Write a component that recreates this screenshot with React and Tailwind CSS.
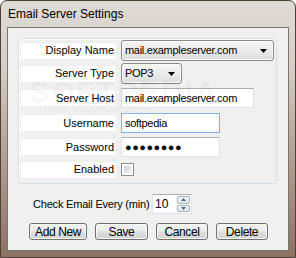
import React from "react";

function Label({ children }) {
  return (
    <div className="w-[95px] h-[16px] bg-white flex items-center justify-end pr-[2px] text-[11px] text-black">
      {children}
    </div>
  );
}

function Arrow() {
  return (
    <svg width="7" height="4" viewBox="0 0 7 4" className="shrink-0">
      <path d="M0 0h7L3.5 4z" fill="#000" />
    </svg>
  );
}

function Select({ value, width }) {
  return (
    <div
      className={`${width} h-[21px] rounded-[3px] border border-[#8a8a8a] bg-gradient-to-b from-[#f6f6f6] via-[#ececec] to-[#dcdcdc] flex items-center justify-between pl-[3px] pr-[6px] text-[11px] tracking-[-0.3px] shadow-[inset_0_0_0_1px_#fbfbfb]`}
    >
      <span>{value}</span>
      <Arrow />
    </div>
  );
}

function Input({ value, width, focus }) {
  return (
    <div
      className={`${width} h-[20px] bg-white border flex items-center pl-[3px] text-[11px] tracking-[-0.3px] ${
        focus
          ? "border-[#7eb4ea]"
          : "border-[#e2e3ea] border-t-[#abadb3]"
      }`}
    >
      {value}
    </div>
  );
}

function Button({ children, width }) {
  return (
    <div
      className={`${width} h-[17px] rounded-[3px] border border-[#707070] bg-[linear-gradient(#f4f4f4,#ececec_45%,#dedede_55%,#d2d2d2)] shadow-[inset_0_0_0_1px_#fcfcfc] flex items-center justify-center text-[12px] tracking-[-0.4px] text-black`}
    >
      {children}
    </div>
  );
}

export default function App() {
  return (
    <div className="w-[296px] h-[258px] overflow-hidden font-['Liberation_Sans',Arial,sans-serif] text-black">
      <div className="relative w-[296px] h-[258px] rounded-t-[7px] border border-[#4d4038] bg-[linear-gradient(#dedad5,#d6cfc8_25%,#b9a697_55%,#8d7262)]">
        <div className="h-[26px] pl-[7px] flex items-center text-[12px] text-black">
          Email Server Settings
        </div>
        <div className="ml-[6px] w-[282px] h-[224px] border border-[#7c7671] bg-[#f0f0f0]">
          <div className="pl-[10px] pt-[10px]">
            <div className="w-[259px] h-[146px] rounded-[3px] border border-[#d5dfe5] shadow-[inset_1px_1px_0_#fff] pl-[2px] pt-[1px] flex flex-col">
              <div className="h-[21px] flex items-center gap-[5px]">
                <Label>Display Name</Label>
                <Select value="mail.exampleserver.com" width="w-[153px]" />
              </div>
              <div className="mt-[2px] h-[21px] flex items-center gap-[5px]">
                <Label>Server Type</Label>
                <Select value="POP3" width="w-[61px]" />
              </div>
              <div className="mt-[4px] h-[20px] flex items-center gap-[5px]">
                <Label>Server Host</Label>
                <Input value="mail.exampleserver.com" width="w-[133px]" />
              </div>
              <div className="mt-[5px] h-[20px] flex items-center gap-[5px]">
                <Label>Username</Label>
                <Input value="softpedia" width="w-[99px]" focus />
              </div>
              <div className="mt-[4px] h-[20px] flex items-center gap-[5px]">
                <Label>Password</Label>
                <Input
                  value={<span className="text-[11px] tracking-[0.5px] text-[#111]">●●●●●●●●</span>}
                  width="w-[99px]"
                />
              </div>
              <div className="mt-[5px] h-[15px] flex items-center gap-[5px]">
                <Label>Enabled</Label>
                <div className="w-[13px] h-[13px] border border-[#8e8f8f] bg-white p-[2px]">
                  <div className="w-full h-full bg-gradient-to-br from-[#cbcfd5] to-[#f6f6f6]" />
                </div>
              </div>
            </div>
          </div>
          <div className="mt-[10px] pl-[25px] flex items-center h-[20px]">
            <span className="w-[119px] text-[11px] tracking-[-0.2px]">Check Email Every (min)</span>
            <div className="w-[40px] h-[20px] bg-white border border-[#e2e3ea] border-t-[#abadb3] flex items-center justify-between">
              <span className="pl-[2px] text-[12px]">10</span>
              <div className="w-[15px] h-full flex flex-col gap-[1px] p-[1px]">
                <div className="flex-1 rounded-[2px] border border-[#a8b2c0] bg-gradient-to-b from-[#f3f5f8] to-[#dde3ea] flex items-center justify-center">
                  <svg width="5" height="3" viewBox="0 0 5 3"><path d="M0 3h5L2.5 0z" fill="#4a6c96" /></svg>
                </div>
                <div className="flex-1 rounded-[2px] border border-[#a8b2c0] bg-gradient-to-b from-[#f3f5f8] to-[#dde3ea] flex items-center justify-center">
                  <svg width="5" height="3" viewBox="0 0 5 3"><path d="M0 0h5L2.5 3z" fill="#4a6c96" /></svg>
                </div>
              </div>
            </div>
          </div>
          <div className="mt-[9px] pl-[21px] flex gap-[8px]">
            <Button width="w-[58px]">Add New</Button>
            <Button width="w-[53px]">Save</Button>
            <Button width="w-[52px]">Cancel</Button>
            <Button width="w-[52px]">Delete</Button>
          </div>
        </div>
        <div className="pointer-events-none absolute left-[28px] top-[68px] text-[30px] font-bold tracking-[2px] text-[#000]/[0.04]">
          SOFTPEDIA
        </div>
        <div className="pointer-events-none absolute left-[42px] top-[98px] text-[12px] text-[#000]/[0.06]">
          www.softpedia.com
        </div>
      </div>
    </div>
  );
}
